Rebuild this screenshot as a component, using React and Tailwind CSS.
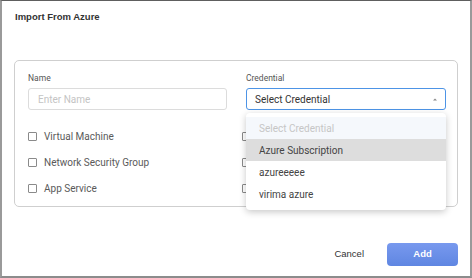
const body = { fontFamily: 'Roboto, "Noto Sans", sans-serif' }
const arial = { fontFamily: '"Liberation Sans", Arial, sans-serif' }

const leftTypes = ['Virtual Machine', 'Network Security Group', 'App Service']
const creds = ['Azure Subscription', 'azureeeee', 'virima azure']

function Box() {
  return <span className="w-[9px] h-[9px] border border-[#8a8a8a] rounded-[1px] bg-white shrink-0" />
}

function Check({ label }) {
  return (
    <label className="flex items-center h-[26px] gap-[7px] text-[10px] text-[#5a5a5a]">
      <Box />
      <span className="whitespace-nowrap">{label}</span>
    </label>
  )
}

export default function App() {
  return (
    <div
      className="w-[472px] h-[278px] bg-white flex flex-col border-t border-t-[#5e5e5e] border-l-2 border-l-[#9a9a9a] border-r-2 border-r-[#9a9a9a] border-b-2 border-b-[#8c8c8c] overflow-hidden"
      style={body}
    >
      <div className="pl-[13px] pt-[10px] h-[59px]">
        <h2 className="text-[9.5px] leading-[12px] font-bold text-[#333]" style={arial}>
          Import From Azure
        </h2>
      </div>

      <div className="mx-3 border border-[#cfcfcf] rounded-[5px] pl-[13px] pr-[11px] pt-[11px] pb-[5px]">
        <div className="flex gap-[19px]">
          <div className="w-[199px]">
            <div className="text-[8.5px] leading-[12px] text-[#555] mb-1">Name</div>
            <div className="h-[22px] border border-[#dcdcdc] rounded-[3px] flex items-center pl-[9px] text-[10px] text-[#c4c4c4]">
              Enter Name
            </div>
          </div>
          <div className="w-[200px]">
            <div className="text-[8.5px] leading-[12px] text-[#555] mb-1">Credential</div>
            <div className="relative">
              <div className="h-[22px] border border-[#4d94e6] rounded-[3px] flex items-center justify-between pl-[8px] pr-[8px] text-[10px] text-[#333]">
                <span>Select Credential</span>
                <svg width="4" height="3" viewBox="0 0 4 3">
                  <path d="M0 2.5 L2 0.5 L4 2.5 Z" fill="#888" />
                </svg>
              </div>
              <div className="absolute z-10 left-0 top-[25px] w-full bg-white rounded-[4px] shadow-[0_2px_7px_rgba(0,0,0,0.22)] pt-1 pb-[5px] text-[10px]">
                <div className="h-[22px] flex items-center pl-[13px] bg-[#f5f8fc] text-[#c6c6c6]">Select Credential</div>
                {creds.map((c, i) => (
                  <div
                    key={c}
                    className={i === 0 ? 'h-[22px] flex items-center pl-[13px] bg-[#dddddd] text-[#444]' : 'h-[22px] flex items-center pl-[13px] text-[#444]'}
                  >
                    {c}
                  </div>
                ))}
              </div>
            </div>
          </div>
        </div>

        <div className="grid grid-cols-[214px_1fr] mt-[13px]">
          <div>
            {leftTypes.map((t) => (
              <Check key={t} label={t} />
            ))}
          </div>
          <div>
            {/* second column is covered by the open dropdown */}
            {[0, 1, 2].map((i) => (
              <div key={i} className="flex items-center h-[26px]">
                <Box />
              </div>
            ))}
          </div>
        </div>
      </div>

      <div className="flex justify-end items-center gap-[23px] mt-[36px] pr-3" style={arial}>
        <button className="text-[9.5px] text-[#333]">Cancel</button>
        <button className="w-[71px] h-[23px] rounded-[4px] bg-gradient-to-b from-[#7899ee] to-[#5f86e2] text-white text-[9.5px] font-bold">
          Add
        </button>
      </div>
    </div>
  )
}
